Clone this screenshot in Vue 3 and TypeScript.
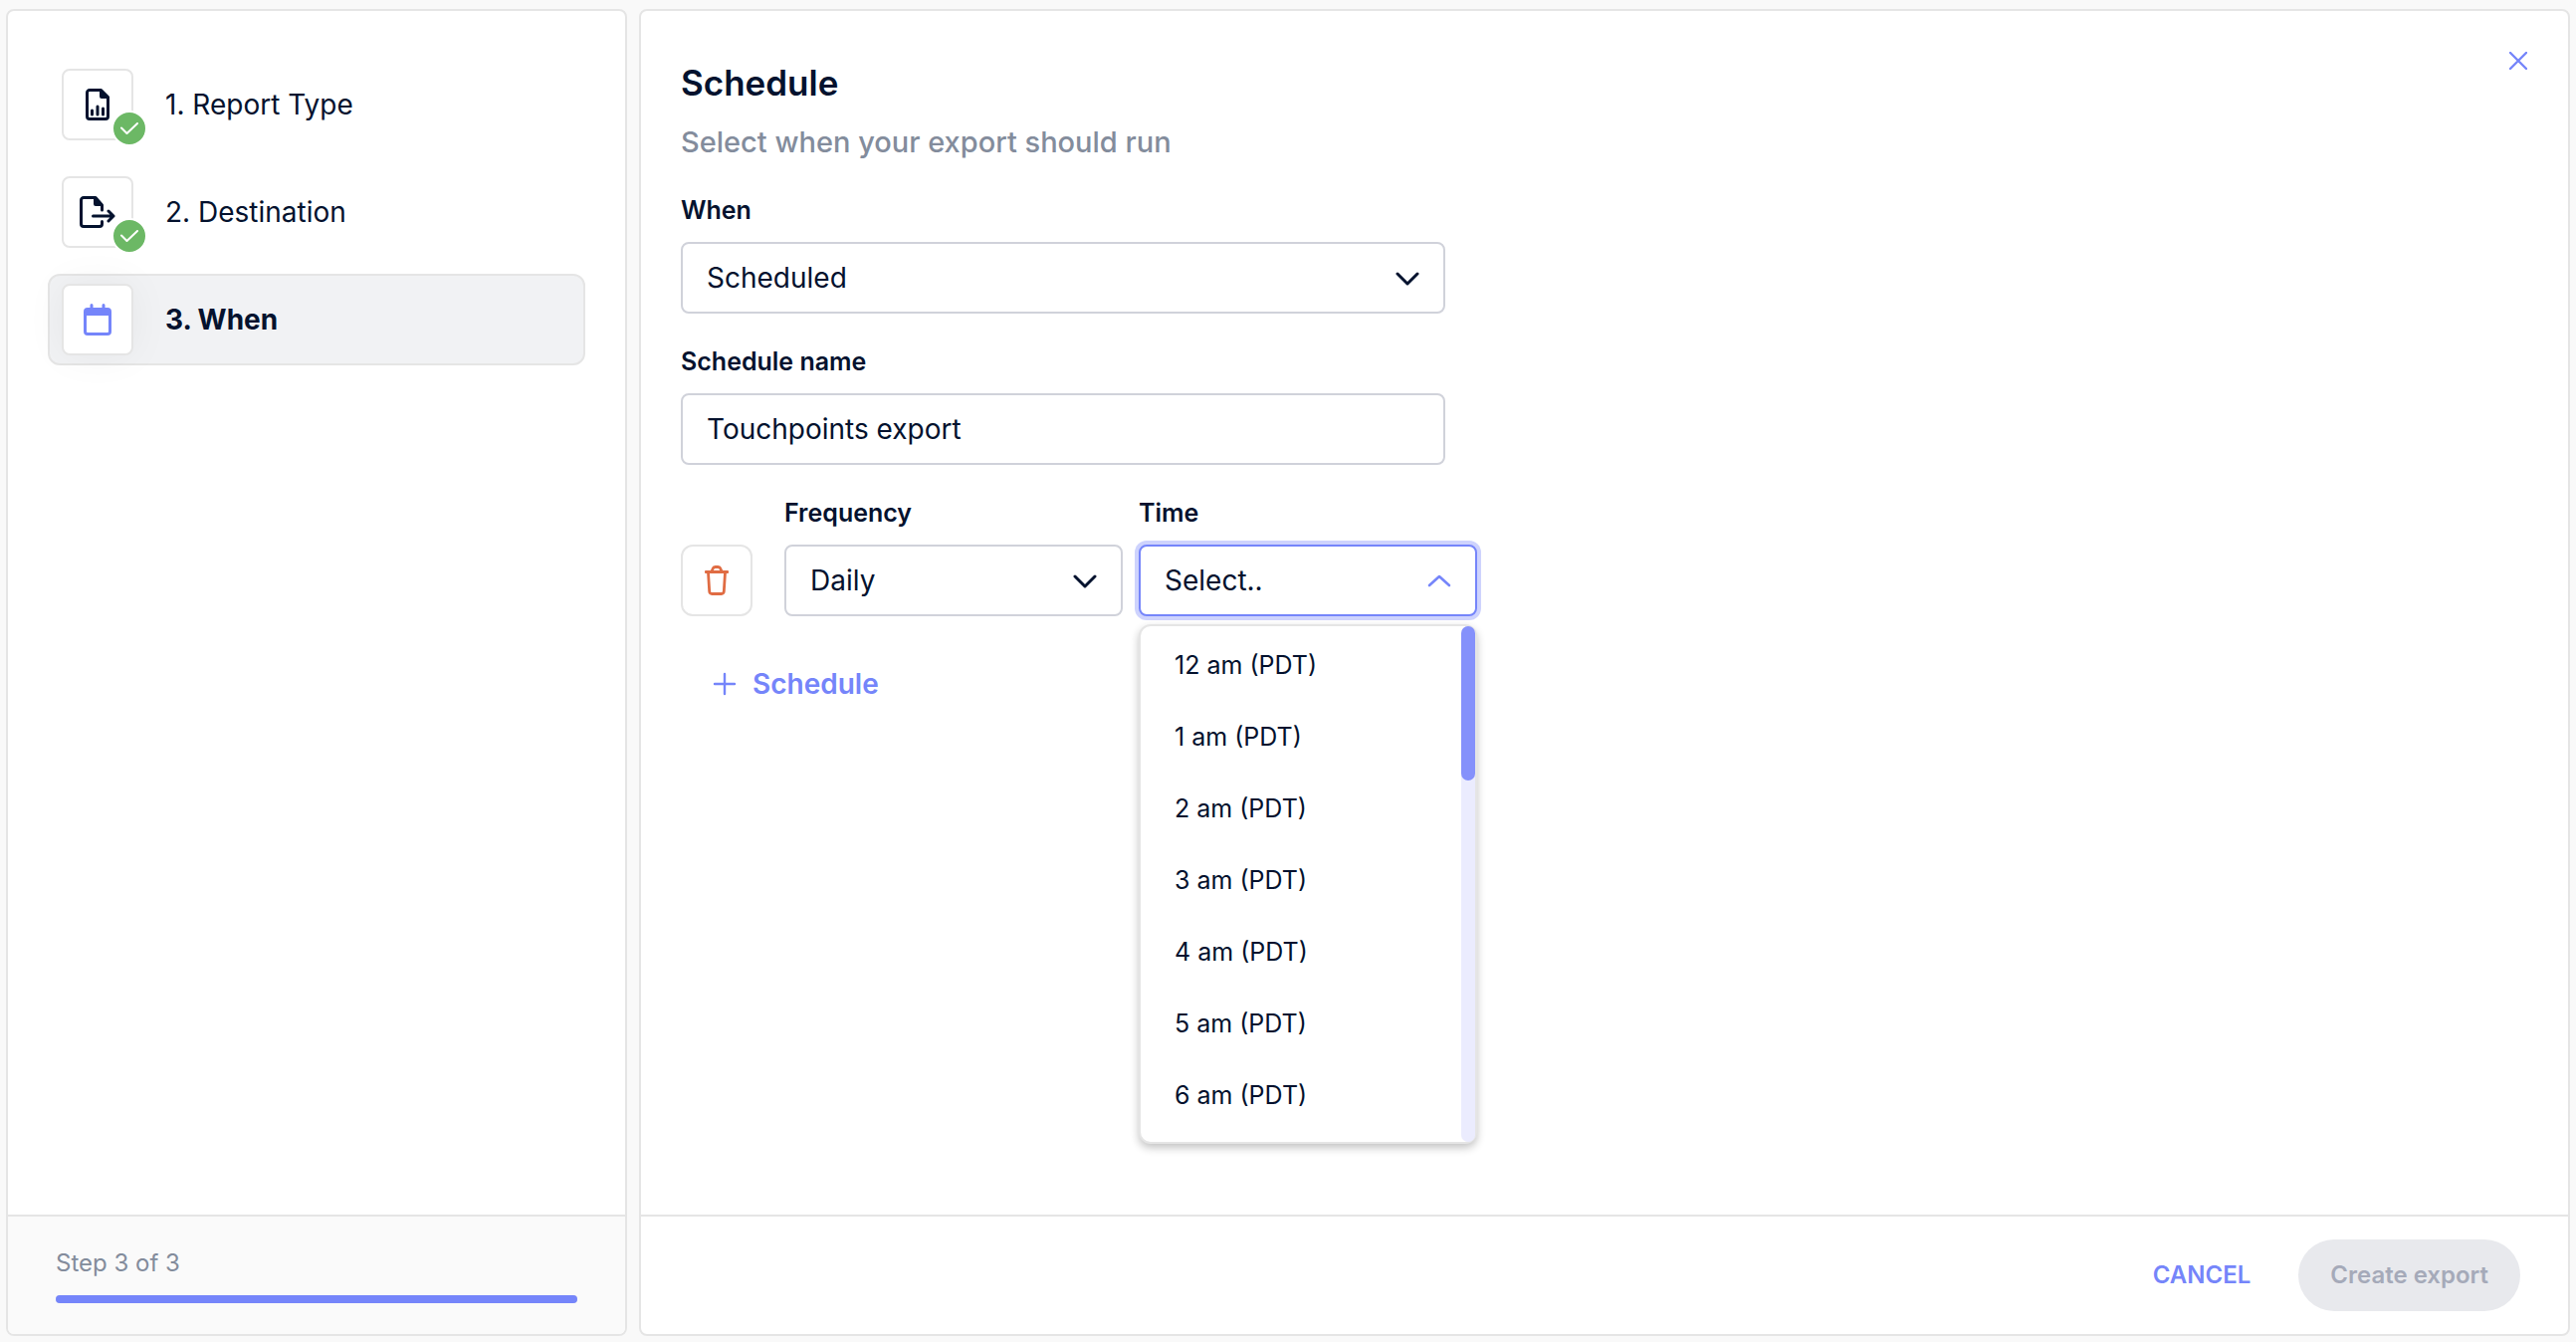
<script setup lang="ts">
import { ref } from 'vue'

type StepIcon = 'report' | 'export' | 'calendar'

interface Step {
  label: string
  icon: StepIcon
  done: boolean
}

const steps: Step[] = [
  { label: '1. Report Type', icon: 'report', done: true },
  { label: '2. Destination', icon: 'export', done: true },
  { label: '3. When', icon: 'calendar', done: false },
]
const current = 2

const when = ref('Scheduled')
const scheduleName = ref('Touchpoints export')
const frequency = ref('Daily')
const time = ref('')

const hours = ['12 am', '1 am', '2 am', '3 am', '4 am', '5 am', '6 am']
const times = hours.map((hour) => `${hour} (PDT)`)
</script>

<template>
  <div class="page">
    <aside class="panel">
      <nav class="steps" aria-label="Export steps">
        <button
          v-for="(step, i) in steps"
          :key="step.label"
          type="button"
          class="step"
          :class="{ active: i === current }"
          :aria-current="i === current ? 'step' : undefined"
        >
          <span class="step-icon">
            <svg v-if="step.icon === 'report'" width="24" height="32" viewBox="0 0 24 32" fill="none">
              <path d="M4 1.500h11.500L22.500 8.500V28a2.500 2.500 0 0 1-2.500 2.500H4A2.500 2.500 0 0 1 1.500 28V4A2.500 2.500 0 0 1 4 1.500Z" stroke="currentColor" stroke-width="3" stroke-linejoin="round" />
              <path d="M14 2h2l6 6.500V10h-6a2 2 0 0 1-2-2Z" fill="currentColor" />
              <path d="M6.500 22v4M12 18v8M17.500 20v6" stroke="currentColor" stroke-width="3" stroke-linecap="round" />
            </svg>
            <svg v-else-if="step.icon === 'export'" width="36" height="32" viewBox="0 0 36 32" fill="none">
              <path d="M22.500 14V9L16 1.500H4A2.500 2.500 0 0 0 1.500 4v24A2.500 2.500 0 0 0 4 30.500h16a2.500 2.500 0 0 0 2.500-2.500v-2.500" stroke="currentColor" stroke-width="3" stroke-linecap="round" stroke-linejoin="round" />
              <path d="M14 2h2l6 6.500V10h-6a2 2 0 0 1-2-2Z" fill="currentColor" />
              <path d="M13.500 20H34M29 15l5 5-5 5" stroke="currentColor" stroke-width="3" stroke-linecap="round" stroke-linejoin="round" />
            </svg>
            <svg v-else width="28" height="32" viewBox="0 0 28 32" fill="none">
              <path d="M4 4h20a4 4 0 0 1 4 4v20a4 4 0 0 1-4 4H4a4 4 0 0 1-4-4V8a4 4 0 0 1 4-4ZM3 12v16a1 1 0 0 0 1 1h20a1 1 0 0 0 1-1V12Z" fill="currentColor" fill-rule="evenodd" />
              <path d="M8 1.500V6M20 1.500V6" stroke="currentColor" stroke-width="3" stroke-linecap="round" />
            </svg>
            <span v-if="step.done" class="badge">
              <svg width="18" height="12" viewBox="0 0 18 12" fill="none">
                <path d="M1 5.500 6.500 11 17 1" stroke="#fff" stroke-width="2" stroke-linecap="round" stroke-linejoin="round" />
              </svg>
            </span>
          </span>
          <span>{{ step.label }}</span>
        </button>
      </nav>
      <footer class="progress">
        <span id="progress-label">Step 3 of 3</span>
        <div class="track" role="progressbar" aria-labelledby="progress-label" aria-valuenow="3" aria-valuemax="3">
          <div class="fill" :style="{ width: `${((current + 1) / steps.length) * 100}%` }"></div>
        </div>
      </footer>
    </aside>

    <main class="panel">
      <div class="content">
        <button type="button" class="close" aria-label="Close">
          <svg width="18" height="18" viewBox="0 0 18 18" fill="none">
            <path d="M1 1l16 16M17 1L1 17" stroke="currentColor" stroke-width="2.400" stroke-linecap="round" />
          </svg>
        </button>
        <h1>Schedule</h1>
        <p class="subtitle">Select when your export should run</p>

        <form class="form" @submit.prevent>
          <div class="field wide">
            <label for="when">When</label>
            <div class="control">
              <select id="when" v-model="when">
                <option>Scheduled</option>
              </select>
              <svg class="chevron" width="24" height="14" viewBox="0 0 24 14" fill="none">
                <path d="M2 2l10 10L22 2" stroke="currentColor" stroke-width="3" stroke-linecap="round" stroke-linejoin="round" />
              </svg>
            </div>
          </div>

          <div class="field wide">
            <label for="name">Schedule name</label>
            <input id="name" v-model="scheduleName" type="text" />
          </div>

          <div class="row">
            <button type="button" class="remove" aria-label="Remove schedule">
              <svg width="24" height="30" viewBox="0 0 24 30" fill="none">
                <path d="M1 6.500h22M3.500 7l1.200 19a2.500 2.500 0 0 0 2.500 2.500h9.600a2.500 2.500 0 0 0 2.500-2.500L20.500 7M7 6l1-2.500A3 3 0 0 1 10.700 1.500h2.600A3 3 0 0 1 16 3.500L17 6" stroke="currentColor" stroke-width="2.800" stroke-linecap="round" stroke-linejoin="round" />
              </svg>
            </button>
            <div class="field narrow">
              <label for="frequency">Frequency</label>
              <div class="control">
                <select id="frequency" v-model="frequency">
                  <option>Daily</option>
                </select>
                <svg class="chevron" width="24" height="14" viewBox="0 0 24 14" fill="none">
                  <path d="M2 2l10 10L22 2" stroke="currentColor" stroke-width="3" stroke-linecap="round" stroke-linejoin="round" />
                </svg>
              </div>
            </div>
            <div class="field narrow">
              <label for="time">Time</label>
              <div class="control open">
                <select id="time" v-model="time">
                  <option value="">Select..</option>
                  <option v-for="t in times" :key="t">{{ t }}</option>
                </select>
                <svg class="chevron" width="24" height="14" viewBox="0 0 24 14" fill="none">
                  <path d="M2 11L12 2l10 9" stroke="currentColor" stroke-width="2.600" stroke-linecap="round" stroke-linejoin="round" />
                </svg>
                <div class="menu">
                  <ul role="listbox" aria-label="Time">
                    <li v-for="t in times" :key="t" role="option" @click="time = t">{{ t }}</li>
                  </ul>
                  <div class="scrollbar"><div class="thumb"></div></div>
                </div>
              </div>
            </div>
          </div>

          <button type="button" class="add">
            <svg width="24" height="24" viewBox="0 0 24 24" fill="none">
              <path d="M12 2v20M2 12h20" stroke="currentColor" stroke-width="2.400" stroke-linecap="round" />
            </svg>
            Schedule
          </button>
        </form>
      </div>
      <footer class="actions">
        <button type="button" class="cancel">CANCEL</button>
        <button type="button" class="create" disabled>Create export</button>
      </footer>
    </main>
  </div>
</template>

<style>
body {
  background: #f9f9f9;
}
</style>

<style scoped>
.page,
.page * {
  box-sizing: border-box;
}
.page {
  display: grid;
  grid-template-columns: 624px minmax(0, 1fr);
  gap: 12px;
  min-height: 100vh;
  padding: 9px 6px 6px;
  background: #f9f9f9;
  color: #04122e;
  font-family: Inter, "Liberation Sans", sans-serif;
  font-size: 28px;
  line-height: 36px;
}
button,
input,
select {
  margin: 0;
  font: inherit;
  color: inherit;
}
button {
  border: 0;
  padding: 0;
  background: none;
}
svg {
  display: block;
}
.panel {
  display: flex;
  flex-direction: column;
  background: #fff;
  border: 2px solid #e5e5e5;
  border-radius: 8px;
  overflow: hidden;
}
.steps {
  flex: 1;
  display: flex;
  flex-direction: column;
  gap: 16px;
  padding: 48px 40px;
}
.step {
  display: flex;
  align-items: center;
  gap: 32px;
  padding: 8px 12px;
  border: 2px solid transparent;
  border-radius: 12px;
  text-align: left;
}
.step.active {
  background: #f1f2f4;
  border-color: #e5e5e5;
  font-weight: 700;
}
.step-icon {
  position: relative;
  display: grid;
  place-items: center;
  width: 72px;
  height: 72px;
  background: #fff;
  border: 2px solid #e5e5e5;
  border-radius: 8px;
}
.active .step-icon {
  color: #7585fa;
  box-shadow: 0 0 40px rgba(0, 0, 0, 0.05);
}
.badge {
  position: absolute;
  right: -16px;
  bottom: -8px;
  display: grid;
  place-items: center;
  width: 36px;
  height: 36px;
  border: 2px solid #fff;
  border-radius: 50%;
  background: #6cb865;
}
.progress {
  display: flex;
  flex-direction: column;
  gap: 16px;
  height: 120px;
  padding: 31px 48px;
  border-top: 2px solid #e5e5e5;
  background: #fafafa;
  color: #838c9c;
  font-size: 24px;
  line-height: 32px;
}
.track {
  height: 8px;
  border-radius: 4px;
  background: #e5e5e5;
}
.fill {
  height: 8px;
  border-radius: 4px;
  background: #7585fa;
}
.content {
  position: relative;
  flex: 1;
  padding: 48px 40px;
}
.close {
  position: absolute;
  top: 32px;
  right: 32px;
  padding: 9px;
  color: #7585fa;
}
h1 {
  margin: 0;
  font-size: 35px;
  font-weight: 600;
  line-height: 48px;
}
.subtitle {
  margin: 16px 0 0;
  color: #838c9c;
  font-size: 29px;
  font-weight: 500;
  line-height: 40px;
}
.form {
  display: flex;
  flex-direction: column;
  align-items: flex-start;
  gap: 32px;
  margin-top: 32px;
}
.field {
  display: flex;
  flex-direction: column;
  gap: 16px;
}
.field label {
  font-size: 25px;
  font-weight: 600;
  line-height: 32px;
}
.wide {
  width: 768px;
}
.narrow {
  width: 340px;
}
.control {
  position: relative;
}
select,
input {
  display: block;
  width: 100%;
  height: 72px;
  padding: 0 24px;
  appearance: none;
  background: #fff;
  border: 2px solid #d0d2da;
  border-radius: 8px;
  outline: 0;
}
.open select {
  border-color: #7585fa;
  box-shadow: 0 0 0 4px #ced3fd;
}
.chevron {
  position: absolute;
  top: 30px;
  right: 26px;
  pointer-events: none;
}
.open .chevron {
  color: #7585fa;
}
.row {
  display: flex;
  align-items: flex-end;
  gap: 16px;
}
.remove {
  display: grid;
  place-items: center;
  width: 72px;
  height: 72px;
  margin-right: 16px;
  border: 2px solid #e5e5e5;
  border-radius: 12px;
  color: #e06c43;
}
.menu {
  position: absolute;
  top: 80px;
  left: 0;
  right: 0;
  display: flex;
  border: 2px solid #e5e5e5;
  border-radius: 12px;
  background: #fff;
  box-shadow: 0 4px 8px rgba(0, 0, 0, 0.24);
}
.menu ul {
  flex: 1;
  height: 518px;
  margin: 0;
  padding: 3px 0;
  overflow: hidden;
  list-style: none;
  font-size: 25px;
}
.menu li {
  padding: 18px 34px;
}
.scrollbar {
  width: 14px;
  border-radius: 7px;
  background: #ebecfe;
}
.thumb {
  height: 155px;
  border-radius: 7px;
  background: #8591fb;
}
.add {
  display: flex;
  align-items: center;
  gap: 16px;
  margin: 18px 0 0 32px;
  color: #7585fa;
  font-weight: 600;
}
.actions {
  display: flex;
  align-items: center;
  justify-content: flex-end;
  gap: 48px;
  height: 120px;
  padding: 0 48px;
  border-top: 2px solid #e5e5e5;
  font-size: 24px;
  font-weight: 600;
}
.cancel {
  color: #7585fa;
}
.create {
  height: 72px;
  padding: 0 32px;
  border-radius: 36px;
  background: #e8e9ed;
  color: #a5aab9;
}
</style>
